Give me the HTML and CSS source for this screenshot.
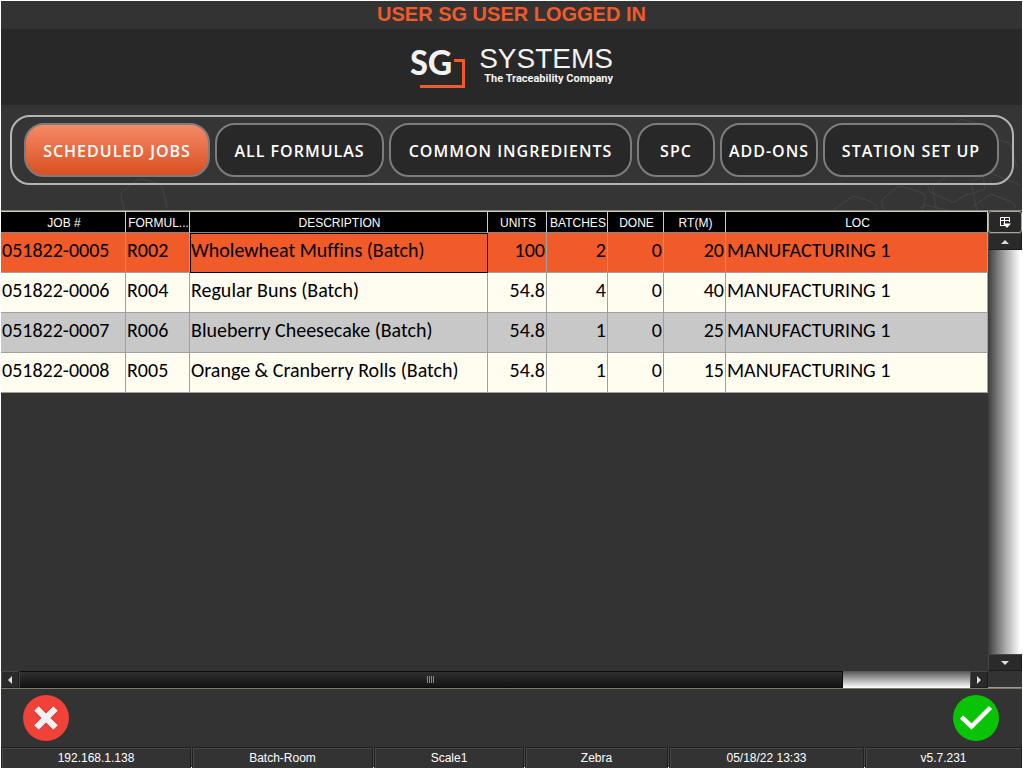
FILE: index.html
```html
<!DOCTYPE html>
<html lang="en">
<head>
<meta charset="utf-8">
<title>SG Systems - Scheduled Jobs</title>
<link rel="stylesheet" href="styles.css">
</head>
<body>
<div class="app">
  <div class="user-bar">USER SG USER LOGGED IN</div>
  <header class="brand">
    <svg class="logo" width="204" height="60" viewBox="0 0 204 60" role="img" aria-label="SG Systems, The Traceability Company">
      <text class="logo-sg" x="0" y="38">SG</text>
      <path d="M44 23.500H53.500V49.500H10" fill="none" stroke="#f15a29" stroke-width="3"/>
      <text class="logo-name" x="203" y="31" text-anchor="end">SYSTEMS</text>
      <text class="logo-tag" x="203" y="45" text-anchor="end">The Traceability Company</text>
    </svg>
  </header>
  <section class="tab-area">
    <svg class="pattern" width="250" height="106" viewBox="0 0 250 106" aria-hidden="true">
      <g fill="none" stroke="#454545">
        <path d="M60 106 78 93Q81 90 85 92L100 97Q104 99 105 106M112 106 110 98Q109 95 112 93L124 83Q128 80 132 82L150 88Q154 90 153 95L150 106M155 78 158 87 180 97Q183 98 186 95L196 88M165 106 161 88Q159 83 163 80L178 69M184 18Q188 13 192 15L207 19M222 34 237 38Q240 40 240 45L245 62M205 106 200 82Q198 77 203 75L218 68 248 80M200 102 216 91Q220 88 224 91L240 97Q243 99 244 104M148 103 154 100 170 104 180 106M209 56 213 84 190 92"/>
      </g>
    </svg>
    <svg class="hexagon" width="50" height="34" viewBox="0 0 50 34" aria-hidden="true">
      <path d="M4 33 1 19Q0 16 3 14L16 4Q19 1 23 2L38 7Q42 8 43 12L47 31" fill="none" stroke="#454545"/>
    </svg>
    <nav class="tabs">
      <button class="tab tab-active" type="button">SCHEDULED JOBS</button>
      <button class="tab" type="button">ALL FORMULAS</button>
      <button class="tab" type="button">COMMON INGREDIENTS</button>
      <button class="tab" type="button">SPC</button>
      <button class="tab" type="button">ADD-ONS</button>
      <button class="tab" type="button">STATION SET UP</button>
    </nav>
  </section>
  <main class="grid">
    <div class="grid-body">
      <table class="jobs">
        <colgroup><col class="c-job"><col class="c-formula"><col class="c-desc"><col class="c-units"><col class="c-batches"><col class="c-done"><col class="c-rt"><col></colgroup>
        <thead>
          <tr><th>JOB #</th><th>FORMUL...</th><th>DESCRIPTION</th><th>UNITS</th><th>BATCHES</th><th>DONE</th><th>RT(M)</th><th>LOC</th></tr>
        </thead>
        <tbody>
          <tr class="selected"><td>051822-0005</td><td>R002</td><td class="focus">Wholewheat Muffins (Batch)</td><td class="num">100</td><td class="num">2</td><td class="num">0</td><td class="num">20</td><td>MANUFACTURING 1</td></tr>
          <tr><td>051822-0006</td><td>R004</td><td>Regular Buns (Batch)</td><td class="num">54.8</td><td class="num">4</td><td class="num">0</td><td class="num">40</td><td>MANUFACTURING 1</td></tr>
          <tr class="alt"><td>051822-0007</td><td>R006</td><td>Blueberry Cheesecake (Batch)</td><td class="num">54.8</td><td class="num">1</td><td class="num">0</td><td class="num">25</td><td>MANUFACTURING 1</td></tr>
          <tr><td>051822-0008</td><td>R005</td><td>Orange &amp; Cranberry Rolls (Batch)</td><td class="num">54.8</td><td class="num">1</td><td class="num">0</td><td class="num">15</td><td>MANUFACTURING 1</td></tr>
        </tbody>
      </table>
    </div>
    <div class="vbar">
      <button class="columns" type="button" aria-label="Choose columns">
        <svg width="12" height="12" viewBox="0 0 12 12"><path d="M1.500 10V1.500H10.500V6M1.500 4.500H10.500M5.500 1V9M1.500 9.500H6" fill="none" stroke="#fff"/><path d="M4 7.500H12L8 12Z" fill="#fff"/></svg>
      </button>
      <button class="arrow" type="button" aria-label="Scroll up"><svg width="8" height="4" viewBox="0 0 8 4"><path d="M0 4 4 0 8 4Z" fill="#ddd"/></svg></button>
      <div class="vtrack"></div>
      <button class="arrow" type="button" aria-label="Scroll down"><svg width="8" height="4" viewBox="0 0 8 4"><path d="M0 0 4 4 8 0Z" fill="#ddd"/></svg></button>
    </div>
    <div class="hbar">
      <button class="arrow side" type="button" aria-label="Scroll left"><svg width="4" height="8" viewBox="0 0 4 8"><path d="M4 0 0 4 4 8Z" fill="#ddd"/></svg></button>
      <div class="htrack"><div class="thumb"><svg width="8" height="7" viewBox="0 0 8 7"><path d="M.5 0V7M2.500 0V7M4.500 0V7M6.500 0V7" stroke="#888"/></svg></div></div>
      <button class="arrow side" type="button" aria-label="Scroll right"><svg width="4" height="8" viewBox="0 0 4 8"><path d="M0 0 4 4 0 8Z" fill="#ddd"/></svg></button>
    </div>
    <div class="corner"></div>
  </main>
  <div class="actions">
    <button class="action" type="button" aria-label="Cancel">
      <svg width="46" height="46" viewBox="0 0 46 46"><circle cx="23" cy="23" r="23" fill="#f04238"/><path d="M13.500 13.500 32.500 32.500M32.500 13.500 13.500 32.500" stroke="#d92f28" stroke-width="8"/><path d="M13.500 13.500 32.500 32.500M32.500 13.500 13.500 32.500" stroke="#f2f2f2" stroke-width="6.500"/></svg>
    </button>
    <button class="action" type="button" aria-label="Confirm">
      <svg width="46" height="46" viewBox="0 0 46 46"><circle cx="23" cy="23" r="23" fill="#09c406"/><path d="M8.500 22 18.500 31.500 37.500 12.500" fill="none" stroke="#fff" stroke-width="4.500"/></svg>
    </button>
  </div>
  <footer class="status">
    <span>192.168.1.138</span><span>Batch-Room</span><span>Scale1</span><span>Zebra</span><span>05/18/22 13:33</span><span>v5.7.231</span>
  </footer>
</div>
</body>
</html>
```
FILE: styles.css
```css
* { box-sizing: border-box; }
body {
  margin: 0;
  background: #fff;
  font-family: "Liberation Sans", Arial, sans-serif;
}
button { margin: 0; padding: 0; border: 0; background: none; font: inherit; }
svg { display: block; }
.app {
  display: flex;
  flex-direction: column;
  height: 100vh;
  padding: 1px;
}
.user-bar {
  background: #333;
  color: #f15a29;
  font-size: 20px;
  font-weight: bold;
  line-height: 26px;
  height: 28px;
  text-align: center;
}
.brand {
  display: flex;
  justify-content: center;
  align-items: center;
  height: 76px;
  background: #282828;
}
.logo-sg { font: bold 38px Carlito, Lato, sans-serif; fill: #f2f2f2; }
.logo-name { font: 28px "Liberation Sans", sans-serif; fill: #f2f2f2; }
.logo-tag { font: bold 11px Roboto, sans-serif; fill: #f2f2f2; }
.tab-area {
  position: relative;
  height: 105px;
  padding: 10px 8px 0 9px;
  background: #353535;
  overflow: hidden;
}
.pattern { position: absolute; right: 0; top: 0; }
.hexagon { position: absolute; left: 119px; top: 72px; }
.tabs {
  position: relative;
  display: grid;
  grid-template-columns: 186fr 169fr 243fr 78fr 98fr 176fr;
  gap: 5px;
  height: 70px;
  padding: 6px 13px 6px 12px;
  border: 2px solid #b4b4b4;
  border-radius: 20px;
}
.tab {
  padding-top: 2px;
  border: 2px solid #7d7d7d;
  border-radius: 20px;
  background: #282828;
  color: #fff;
  font-family: "Open Sans", "Noto Sans", sans-serif;
  font-size: 16px;
  font-weight: 600;
  letter-spacing: 1px;
  white-space: nowrap;
}
.tab-active { background: linear-gradient(#f58a66, #d94f22); }
.grid {
  flex: 1;
  display: grid;
  grid-template-columns: minmax(0, 1fr) 34px;
  grid-template-rows: minmax(0, 1fr) 17px;
  border-top: 1px solid #8a867a;
  border-bottom: 1px solid #7f7b68;
  background: #333;
  min-height: 0;
}
.grid-body { overflow: hidden; }
.jobs {
  width: 100%;
  table-layout: fixed;
  border-collapse: separate;
  border-spacing: 0;
}
.c-job { width: 125px; }
.c-formula { width: 64px; }
.c-desc { width: 298px; }
.c-units { width: 59px; }
.c-batches { width: 61px; }
.c-done { width: 56px; }
.c-rt { width: 62px; }
.jobs th {
  height: 22px;
  padding: 2px 0 0 2px;
  background: #000;
  border-top: 1px solid #ccc;
  border-right: 1px solid #ccc;
  border-bottom: 1px solid #888;
  color: #fff;
  font-size: 12px;
  font-weight: normal;
  line-height: 18px;
  white-space: nowrap;
}
.jobs td {
  height: 40px;
  padding: 0 1px 5px;
  background: #fffdf0;
  border-right: 1px solid #a0a0a0;
  border-bottom: 1px solid #a0a0a0;
  color: #000;
  font-family: Calibri, Carlito, Lato, sans-serif;
  font-size: 20px;
  font-variant-ligatures: none;
  line-height: 24px;
  white-space: nowrap;
}
.jobs .alt td { background: #c8c8c8; }
.jobs .selected td { background: #f15a29; }
.jobs .selected .focus { outline: 1px solid #000; outline-offset: -1px; }
.jobs .num { text-align: right; }
.vbar { display: flex; flex-direction: column; }
.columns {
  display: grid;
  place-items: center;
  height: 22px;
  border: 1px solid #aaa69c;
  border-radius: 3px;
  background: #282828;
}
.arrow {
  display: grid;
  place-items: center;
  height: 17px;
  border: 1px solid #1c1c1c;
  border-top-color: #484848;
  border-left-color: #484848;
  background: #2a2a2a;
}
.vtrack { flex: 1; background: linear-gradient(90deg, #3c3c3c, #a8a8a8 50%, #fff 95%); }
.hbar { display: flex; }
.side { width: 18px; }
.htrack { flex: 1; background: linear-gradient(#555, #fff); }
.thumb {
  display: grid;
  place-items: center;
  width: 86.6%;
  height: 17px;
  border: 1px solid #0c0c0c;
  border-left-color: #444;
  background: linear-gradient(#303030, #131313);
}
.corner { border-bottom: 1px solid #999; }
.actions {
  display: flex;
  justify-content: space-between;
  align-items: center;
  height: 58px;
  padding: 0 23px 0 22px;
  background: #333;
}
.action { border-radius: 50%; }
.status {
  display: grid;
  grid-template-columns: 190fr 181fr 150fr 143fr 195fr 157fr;
  gap: 1px;
  height: 20px;
  background: #484848;
  color: #fff;
  font-size: 12px;
  line-height: 20px;
  text-align: center;
}
.status span {
  border: 1px solid #202020;
  background: #333;
  box-shadow: inset 1px 1px #484848;
}
```
